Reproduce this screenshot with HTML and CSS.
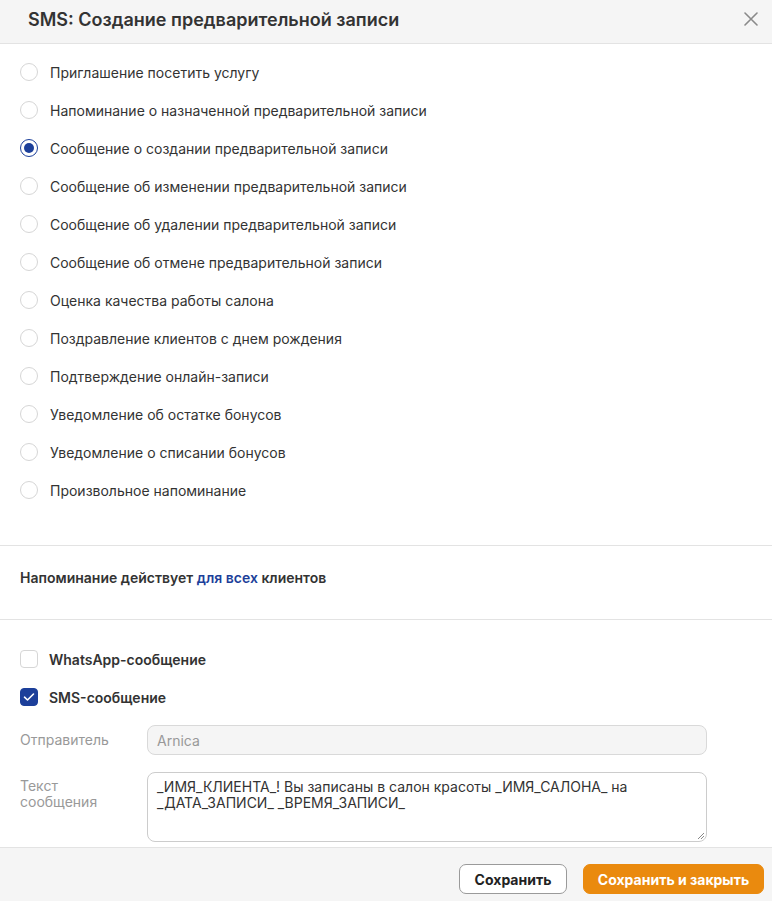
FILE: index.html
```html
<!DOCTYPE html>
<html lang="ru">
<head>
<meta charset="utf-8">
<title>SMS: Создание предварительной записи</title>
<link rel="stylesheet" href="styles.css">
</head>
<body>
<div class="modal">
  <header class="modal-header">
    <h1 class="modal-title">SMS: Создание предварительной записи</h1>
    <button class="close-btn" aria-label="Закрыть">
      <svg width="14" height="14" viewBox="0 0 14 14"><path d="M1 1L13 13M13 1L1 13" stroke="#8a8a8a" stroke-width="1.6" stroke-linecap="round" fill="none"/></svg>
    </button>
  </header>

  <div class="modal-body">
    <section class="radio-list">
      <label class="radio-row"><span class="radio"></span><span class="radio-text">Приглашение посетить услугу</span></label>
      <label class="radio-row"><span class="radio"></span><span class="radio-text">Напоминание о назначенной предварительной записи</span></label>
      <label class="radio-row"><span class="radio checked"></span><span class="radio-text">Сообщение о создании предварительной записи</span></label>
      <label class="radio-row"><span class="radio"></span><span class="radio-text">Сообщение об изменении предварительной записи</span></label>
      <label class="radio-row"><span class="radio"></span><span class="radio-text">Сообщение об удалении предварительной записи</span></label>
      <label class="radio-row"><span class="radio"></span><span class="radio-text">Сообщение об отмене предварительной записи</span></label>
      <label class="radio-row"><span class="radio"></span><span class="radio-text">Оценка качества работы салона</span></label>
      <label class="radio-row"><span class="radio"></span><span class="radio-text">Поздравление клиентов с днем рождения</span></label>
      <label class="radio-row"><span class="radio"></span><span class="radio-text">Подтверждение онлайн-записи</span></label>
      <label class="radio-row"><span class="radio"></span><span class="radio-text">Уведомление об остатке бонусов</span></label>
      <label class="radio-row"><span class="radio"></span><span class="radio-text">Уведомление о списании бонусов</span></label>
      <label class="radio-row"><span class="radio"></span><span class="radio-text">Произвольное напоминание</span></label>
    </section>

    <section class="scope">
      <p class="scope-text">Напоминание действует <a class="scope-link" href="#">для всех</a> клиентов</p>
    </section>

    <section class="channels">
      <label class="check-row"><span class="checkbox"></span><span class="check-text">WhatsApp-сообщение</span></label>
      <label class="check-row"><span class="checkbox checked"><svg width="12" height="10" viewBox="0 0 12 10"><path d="M1.5 5.2L4.5 8L10.5 2" stroke="#fff" stroke-width="1.6" fill="none" stroke-linecap="round" stroke-linejoin="round"/></svg></span><span class="check-text">SMS-сообщение</span></label>

      <div class="form-row sender-row">
        <span class="form-label">Отправитель</span>
        <div class="input disabled">Arnica</div>
      </div>
      <div class="form-row text-row">
        <span class="form-label">Текст<br>сообщения</span>
        <div class="textarea">_ИМЯ_КЛИЕНТА_! Вы записаны в салон красоты _ИМЯ_САЛОНА_ на _ДАТА_ЗАПИСИ_ _ВРЕМЯ_ЗАПИСИ_<svg class="grip" width="9" height="9" viewBox="0 0 9 9"><path d="M8 2L2 8M8 5L5 8" stroke="#888" stroke-width="1" fill="none"/></svg></div>
      </div>
    </section>
  </div>

  <footer class="modal-footer">
    <button class="btn btn-outline">Сохранить</button>
    <button class="btn btn-primary">Сохранить и закрыть</button>
  </footer>
</div>
</body>
</html>
```

FILE: styles.css
```css
* { box-sizing: border-box; }
html, body { margin: 0; padding: 0; }
body {
  font-family: Inter, "Noto Sans", "DejaVu Sans", sans-serif;
  color: #333;
  background: #fff;
  width: 772px;
  height: 901px;
  overflow: hidden;
}
.modal {
  display: flex;
  flex-direction: column;
  height: 901px;
}
.modal-header {
  height: 44px;
  background: #f5f5f5;
  border-bottom: 1px solid #e3e3e3;
  display: flex;
  align-items: center;
  justify-content: space-between;
  padding: 0 14px 0 28px;
  flex: none;
}
.modal-title {
  margin: 0;
  font-size: 18px;
  font-weight: 600;
  color: #333;
  letter-spacing: 0;
  padding-bottom: 4px;
}
.close-btn {
  border: none;
  background: transparent;
  padding: 0;
  width: 14px;
  height: 14px;
  display: flex;
  margin-bottom: 6px;
}
.modal-body {
  flex: 1;
  overflow: hidden;
}
.radio-list {
  padding: 9px 20px 36px;
  border-bottom: 1px solid #e3e3e3;
}
.radio-row {
  display: flex;
  align-items: center;
  height: 38px;
  gap: 12px;
}
.radio {
  width: 18px;
  height: 18px;
  border-radius: 50%;
  border: 1px solid #d6d6d6;
  flex: none;
  display: flex;
  align-items: center;
  justify-content: center;
}
.radio.checked {
  border: 1.5px solid #1c3f9a;
}
.radio.checked::after {
  content: "";
  width: 10px;
  height: 10px;
  border-radius: 50%;
  background: #1c3f9a;
}
.radio-text {
  font-size: 14px;
  color: #333;
}
.scope {
  padding: 22px 20px 31px;
  border-bottom: 1px solid #e3e3e3;
}
.scope-text {
  margin: 0;
  font-size: 14px;
  font-weight: 600;
  line-height: 20px;
  color: #333;
}
.scope-link {
  color: #1c3f9a;
  text-decoration: none;
}
.channels {
  padding: 20px 65px 0 20px;
}
.check-row {
  display: flex;
  align-items: center;
  height: 38px;
  gap: 11px;
}
.checkbox {
  width: 18px;
  height: 18px;
  border-radius: 4px;
  border: 1px solid #d6d6d6;
  flex: none;
  display: flex;
  align-items: center;
  justify-content: center;
}
.checkbox.checked {
  background: #1c3f9a;
  border-color: #1c3f9a;
}
.check-text {
  font-size: 14px;
  font-weight: 600;
  color: #333;
}
.form-row {
  display: flex;
}
.sender-row {
  margin-top: 9px;
  align-items: center;
}
.text-row {
  margin-top: 17px;
  align-items: flex-start;
}
.form-label {
  width: 127px;
  flex: none;
  font-size: 14px;
  color: #999;
  line-height: 16px;
}
.text-row .form-label {
  padding-top: 6px;
}
.input {
  flex: 1;
  height: 30px;
  border: 1px solid #d9d9d9;
  border-radius: 8px;
  padding: 0 9px;
  font-size: 14px;
  display: flex;
  align-items: center;
}
.input.disabled {
  background: #f5f5f5;
  color: #999;
}
.textarea {
  flex: 1;
  height: 70px;
  border: 1px solid #ccc;
  border-radius: 8px;
  padding: 6px 9px;
  font-size: 14px;
  line-height: 16px;
  color: #333;
  position: relative;
}
.grip {
  position: absolute;
  right: 1px;
  bottom: 1px;
}
.modal-footer {
  height: 54px;
  flex: none;
  background: #f5f5f5;
  border-top: 1px solid #e3e3e3;
  display: flex;
  justify-content: flex-end;
  align-items: flex-start;
  gap: 16px;
  padding: 16px 8px 0 0;
}
.btn {
  height: 30px;
  border-radius: 7px;
  font-family: Inter, "Noto Sans", sans-serif;
  font-size: 14px;
  font-weight: 700;
  padding: 0;
  cursor: pointer;
}
.btn-outline {
  width: 108px;
  background: #fff;
  border: 1px solid #9a9a9a;
  color: #222;
}
.btn-primary {
  width: 181px;
  background: #ea8a0e;
  border: 1px solid #ea8a0e;
  color: #fff;
}
```
